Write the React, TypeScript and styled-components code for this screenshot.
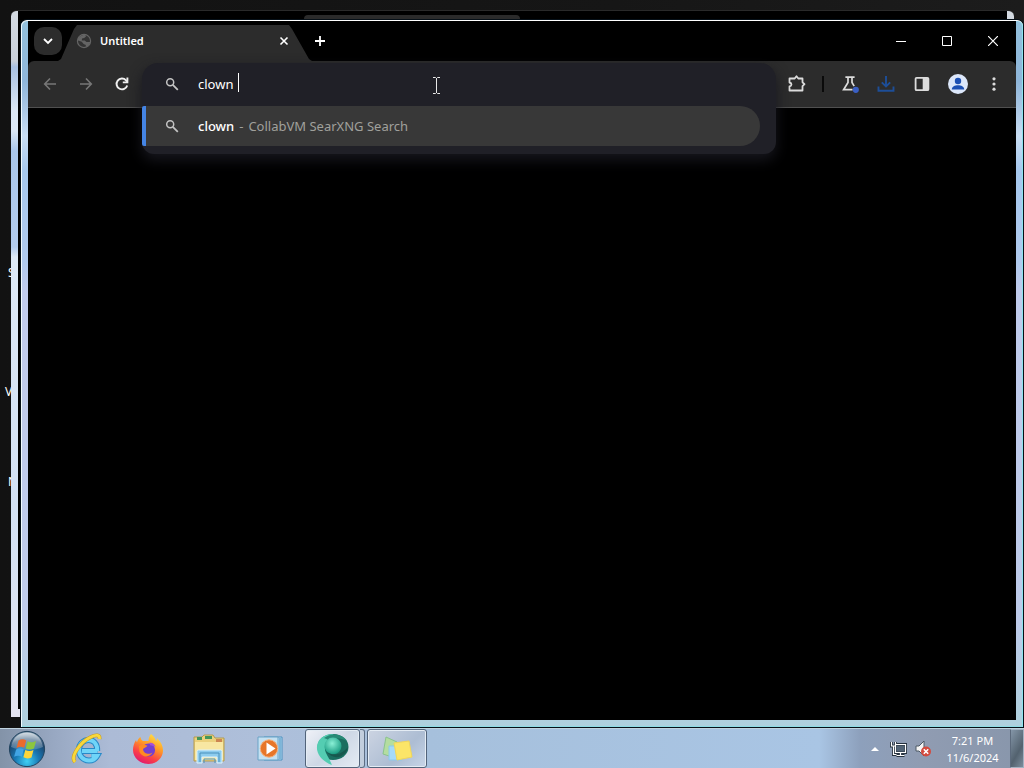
import React from "react";
import styled, { createGlobalStyle, css } from "styled-components";

const GlobalStyle = createGlobalStyle`
  * { box-sizing: border-box; }
  body {
    margin: 0;
    background: #141414;
    font-family: "Noto Sans", "Open Sans", sans-serif;
    font-size: 13px;
    color: #fff;
  }
  button { font: inherit; color: inherit; border: 0; padding: 0; background: none; }
  svg { display: block; }
`;

const Screen = styled.div`
  display: flex;
  flex-direction: column;
  height: 100vh;
  overflow: hidden;
`;

const Desktop = styled.main`
  position: relative;
  flex: 1;
  min-height: 0;
  overflow: hidden;
  background: linear-gradient(90deg, #121212, #161616 60%, #1c1c1c);
`;

const ShortcutLabel = styled.span<{ $x: number; $y: number }>`
  position: absolute;
  left: ${(p) => p.$x}px;
  top: ${(p) => p.$y}px;
  font-size: 12px;
  line-height: 16px;
`;

const BackWindow = styled.section`
  position: absolute;
  top: 10px;
  left: 11px;
  right: 10px;
  bottom: 11px;
  padding: 1px 7px 7px;
  border-top: 1px solid #2a2a2a;
  border-radius: 6px 6px 0 0;
  background: linear-gradient(180deg, #d4dae2 0, #c9cfd8 50px, #a9c0e0 56px, #dce7f4 100px, #dce8f5 120px, #a9c6ea 140px, #b3cbec 236px, #dde8f5 246px, #d3e0f2 70%, #e4e4f0);
`;

const BackClient = styled.div`
  height: 100%;
  margin: -1px 0 0;
  padding: 4px 0 0 286px;
  background: #000;
`;

const BackTab = styled.div`
  width: 216px;
  height: 10px;
  border-radius: 4px 4px 0 0;
  background: #2b2b2b;
`;

const Window = styled.section`
  position: absolute;
  top: 20px;
  left: 21px;
  right: 1px;
  bottom: 1px;
  padding: 0 7px 7px;
  border-top: 1px solid #fff;
  border-radius: 6px 6px 0 0;
  background: linear-gradient(180deg, #93c0dc 0, #8fb6da 60px, #adc9e6 90px, #c9def4 115px, #a6c8ee 150px, #b0caee 240px, #c0cbec 270px, #becbea 85%, #aed0dd);
  box-shadow: inset 1px 0 #f0faff, inset -1px 0 #8de4ee, inset 0 -1px #8ddce4, 0 0 0 1px #061018;
`;

const Client = styled.div`
  display: flex;
  flex-direction: column;
  height: 100%;
  background: #000;
`;

const TabStrip = styled.header`
  display: flex;
  align-items: center;
  height: 40px;
  padding-left: 6px;
`;

const SquareButton = styled.button<{ $filled?: boolean }>`
  display: grid;
  place-items: center;
  width: 28px;
  height: 28px;
  border-radius: 10px;
  ${(p) => p.$filled && css`background: #2c2c2c;`}
`;

const Tab = styled.div`
  display: flex;
  align-items: center;
  align-self: flex-end;
  width: 254px;
  height: 36px;
  margin: 0 -6px 0 -4px;
  padding: 0 20px 4px 18px;
  background: #2c2c2c;
  clip-path: polygon(0 100%, 3px 34px, 16px 4px, 19px 0, 231px 0, 234px 4px, 251px 34px, 100% 100%);
`;

const TabTitle = styled.span`
  flex: 1;
  margin-left: 8px;
  font-size: 11px;
  line-height: 16px;
  font-weight: 600;
`;

const TabClose = styled.button`
  display: grid;
  place-items: center;
  width: 16px;
  height: 16px;
`;

const WindowControls = styled.div`
  display: flex;
  margin-left: auto;
`;

const Control = styled.button`
  display: grid;
  place-items: center;
  width: 46px;
  height: 30px;
`;

const Toolbar = styled.div`
  display: flex;
  align-items: center;
  height: 47px;
  padding: 0 4px;
  background: #2c2c2c;
  border-bottom: 1px solid #505050;
  border-radius: 6px 6px 0 0;
`;

const ToolButton = styled.button<{ $tone?: string }>`
  display: grid;
  place-items: center;
  width: 36px;
  height: 36px;
  color: ${(p) => p.$tone ?? "#dcdcdc"};
`;

const Divider = styled.span`
  width: 2px;
  height: 16px;
  margin: 0 8px 0 7px;
  background: #0a0a0a;
`;

const Omnibox = styled.div`
  position: relative;
  flex: 1;
  align-self: stretch;
  margin: 0 3px 0 2px;
`;

const OmniPopup = styled.div`
  position: absolute;
  z-index: 1;
  top: 2px;
  left: 0;
  right: 0;
  padding-bottom: 8px;
  border-radius: 16px 16px 12px 12px;
  background: #202027;
  box-shadow: 0 6px 14px #17171e;
`;

const OmniRow = styled.div`
  position: relative;
  display: flex;
  align-items: center;
  height: 43px;
  padding: 0 0 2px 22px;
`;

const Query = styled.input`
  flex: 1;
  min-width: 0;
  height: 24px;
  margin-left: 18px;
  padding: 0;
  border: 0;
  outline: 0;
  background: transparent;
  color: #fff;
  font: inherit;
`;

const Caret = styled.span`
  position: absolute;
  left: 96px;
  top: 10px;
  width: 1px;
  height: 19px;
  background: #fff;
`;

const Suggestion = styled.button`
  display: flex;
  align-items: center;
  width: calc(100% - 16px);
  height: 40px;
  padding-left: 18px;
  border-left: 4px solid #4484e4;
  border-radius: 2px 20px 20px 2px;
  background: #383838;
  line-height: 20px;
`;

const Match = styled.span`
  margin-left: 18px;
  font-weight: 500;
`;

const Engine = styled.span`
  display: flex;
  gap: 5px;
  margin-left: 5px;
  color: #a0a09c;
`;

const Pointer = styled.svg`
  position: absolute;
  left: 290px;
  top: 14px;
`;

const Page = styled.div`
  flex: 1;
  background: #000;
`;

const Taskbar = styled.footer`
  display: flex;
  height: 40px;
  border-top: 1px solid #bfd3e0;
  background: linear-gradient(90deg, #8393a8 0, #98a8c2 54px, #acbbd6 110px, #aebfda 260px, #a6c0dc 430px, #a9c5e4 80%, #8da0bc 84%, #909cb2 90%, #8896ab);
`;

const StartButton = styled.button`
  display: grid;
  place-items: center;
  width: 54px;
  margin-right: 3px;
`;

const Launchers = styled.nav`
  display: flex;
  gap: 1px;
`;

const TaskButton = styled.button<{ $state?: "active" | "open"; $stacked?: boolean }>`
  display: grid;
  place-items: center;
  width: 60px;
  height: 39px;
  ${(p) =>
    p.$state &&
    css`
      border: 1px solid #52637a;
      border-radius: 3px;
      box-shadow: inset 0 0 0 1px #e4ecf4;
      background: ${p.$state === "active"
        ? "linear-gradient(135deg, #f0f2f8, #cdd7e5 50%, #e4ebf4)"
        : "linear-gradient(135deg, #ccd4e2, #adbdd3 60%, #c7d5e8)"};
    `}
  ${(p) =>
    p.$stacked &&
    css`
      width: 55px;
      margin-left: 4px;
    `}
`;

const StackEdge = styled.span`
  width: 5px;
  height: 39px;
  margin: 0 1px 0 -1px;
  border: 1px solid #5d6e84;
  border-left: 0;
  border-radius: 0 3px 3px 0;
  background: #c2cedd;
`;

const Tray = styled.div`
  display: flex;
  align-items: center;
  margin-left: auto;
`;

const TrayButton = styled.button`
  display: grid;
  place-items: center;
  width: 24px;
  height: 24px;
`;

const Clock = styled.button`
  width: 75px;
  font-size: 11px;
  line-height: 17px;
  text-align: center;
`;

const ShowDesktop = styled.button`
  align-self: stretch;
  width: 14px;
  border: 1px solid #a4b2c2;
  border-left-color: #5c6a7c;
  background: linear-gradient(120deg, #8496a8, #53626f 60%, #7c8d9c);
`;

const SearchIcon = () => (
  <svg width="16" height="16" viewBox="0 0 16 16" fill="none" stroke="#c4c4c4" strokeWidth="1.5">
    <circle cx="6.2" cy="6.2" r="3.5" />
    <path d="M8.8 8.8l5 5" strokeWidth="1.8" />
  </svg>
);

const Globe = () => (
  <svg width="16" height="16" viewBox="0 0 16 16">
    <circle cx="8" cy="8" r="6.6" fill="#333" stroke="#646464" strokeWidth="1.2" />
    <path d="M2 5.5C4 3 6.5 2 9.2 1.8L10 3.4 8.2 5 6 5.6 5.8 7.4h3l1.6 1.5h3.8c-.4 2.6-2 4.6-4.4 5.2V12L7.6 11 5.8 8.8 2 7.4z" fill="#646464" />
  </svg>
);

const Chevron = () => (
  <svg width="12" height="12" viewBox="0 0 12 12" fill="none" stroke="#fff" strokeWidth="1.8">
    <path d="M2 4l4 4 4-4" />
  </svg>
);

const Arrow = ({ flip }: { flip?: boolean }) => (
  <svg width="16" height="16" viewBox="0 0 16 16" fill="none" stroke="currentColor" strokeWidth="1.6">
    <path d={flip ? "M2 8h11M8 2.5L13.3 8 8 13.5" : "M14 8H3M8 2.5L2.7 8 8 13.5"} />
  </svg>
);

const Reload = () => (
  <svg width="16" height="16" viewBox="0 0 16 16" fill="none" stroke="currentColor" strokeWidth="1.9">
    <path d="M13.2 9.4A5.4 5.4 0 1 1 12 4.3l1.2 1.3" />
    <path d="M13.4 1.5v4.9H8.8" />
  </svg>
);

const Puzzle = () => (
  <svg width="20" height="20" viewBox="0 0 20 20" fill="none" stroke="currentColor" strokeWidth="1.8" strokeLinejoin="round">
    <path d="M2.5 4.5h5.200l1.800-2.200 1.800 2.200H15.500v3.800l2 1.900-2 1.900v4.400h-13v-4c2.600-.6 2.600-3.400 0-4z" />
  </svg>
);

const Flask = () => (
  <svg width="20" height="20" viewBox="0 0 20 20" fill="none" stroke="currentColor" strokeWidth="1.7">
    <path d="M5.4 3.2h9.2M8 3v5.500L3.600 15.700h9M12 3v5.500l2.200 3.600" />
    <circle cx="15.8" cy="15.8" r="3.1" fill="#3a5fc4" stroke="none" />
  </svg>
);

const Download = () => (
  <svg width="20" height="20" viewBox="0 0 20 20" fill="none" stroke="currentColor" strokeWidth="1.9">
    <path d="M10 2v10M5.8 8.3l4.2 4.2 4.2-4.2M2.5 12.5v4.2h15v-4.2" />
  </svg>
);

const SidePanel = () => (
  <svg width="16" height="16" viewBox="0 0 16 16">
    <rect x="1.6" y="1.8" width="12.8" height="12.4" rx="1" fill="none" stroke="currentColor" strokeWidth="1.8" />
    <path d="M8.7 2h5.6v12H8.7z" fill="currentColor" />
  </svg>
);

const Profile = () => (
  <svg width="20" height="20" viewBox="0 0 20 20">
    <circle cx="10" cy="10" r="10" fill="#dce7fa" />
    <circle cx="10" cy="7" r="3.2" fill="#1c50b4" />
    <path d="M3.8 15.4c0-2.8 3-4.2 6.2-4.2s6.2 1.4 6.2 4.2z" fill="#1c50b4" />
  </svg>
);

const Dots = () => (
  <svg width="16" height="16" viewBox="0 0 16 16" fill="currentColor">
    <circle cx="8" cy="2.8" r="1.6" />
    <circle cx="8" cy="8" r="1.6" />
    <circle cx="8" cy="13.2" r="1.6" />
  </svg>
);

const StartOrb = () => (
  <svg width="38" height="38" viewBox="0 0 38 38">
    <defs>
      <radialGradient id="orb" cx=".5" cy=".85" r=".85">
        <stop offset="0" stopColor="#3fd0f4" />
        <stop offset=".4" stopColor="#1878b4" />
        <stop offset=".75" stopColor="#1c466e" />
        <stop offset="1" stopColor="#7e98ac" />
      </radialGradient>
      <linearGradient id="orbShine" x2="0" y2="1">
        <stop stopColor="#fff" stopOpacity=".7" />
        <stop offset="1" stopColor="#fff" stopOpacity=".15" />
      </linearGradient>
    </defs>
    <circle cx="19" cy="19" r="17.6" fill="url(#orb)" stroke="#23445f" />
    <path d="M3 17C5 6 12 2.5 19 2.5S33 6 35 17c-8 4-24 4-32 0z" fill="url(#orbShine)" />
    <path d="M10.5 10.5c3-1.7 5.3-1.5 7.7-.1l-2 7.4c-2.6-1.4-4.8-1.4-7.7.1z" fill="#ea6a2c" />
    <path d="M19.6 11.2c2.7 1.4 5 1.4 8.4-.2l-2 7.5c-3 1.5-5.6 1.3-8.3-.1z" fill="#8cc63e" />
    <path d="M8.1 19.4c2.8-1.5 5.2-1.4 7.7 0l-2 7.4c-2.5-1.4-4.8-1.4-7.7 0z" fill="#41a4e4" />
    <path d="M17.3 19.9c2.7 1.4 5.2 1.5 8.2.2l-2 7.3c-3 1.5-5.5 1.3-8.1-.1z" fill="#fcd63a" />
  </svg>
);

const Explorer = () => (
  <svg width="32" height="32" viewBox="0 0 32 32" fill="none">
    <path d="M26.5 18H11M26.2 18C26.5 10 22 7 17.5 7S8 10.5 8 17s4.5 10.5 10 10.5c4 0 6.6-2 8-4.5h-5.5" stroke="#2789c8" strokeWidth="6" />
    <path d="M26.5 18H11M26.2 18C26.5 10 22 7 17.5 7S8 10.5 8 17s4.5 10.5 10 10.5c4 0 6.6-2 8-4.5h-5.5" stroke="#6fd4f8" strokeWidth="4" />
    <path d="M4 29C-1 24 9 9 20 4c5-2.5 9-2.2 8.5 2" stroke="#c89a20" strokeWidth="3.8" />
    <path d="M4 29C-1 24 9 9 20 4c5-2.5 9-2.2 8.5 2" stroke="#f8d83c" strokeWidth="2.8" />
  </svg>
);

const Firefox = () => (
  <svg width="32" height="32" viewBox="0 0 32 32">
    <defs>
      <linearGradient id="fox" x1=".8" y1="0" x2=".3" y2="1">
        <stop stopColor="#ffe84a" />
        <stop offset=".4" stopColor="#ff9a26" />
        <stop offset=".72" stopColor="#fb4146" />
        <stop offset="1" stopColor="#df1770" />
      </linearGradient>
    </defs>
    <path d="M19 1c3 2.5 4.5 4.5 5 7 1-1 1-2 1-3 4 4 6 8 6 12.5C31 25 24.5 31 16.5 31S1 25 1 17c0-4 1.2-7 3-10 .2 1 .5 1.8 1 2.3C5.7 6.5 7 5 8.500 4c.2 2 1 3.2 2.5 4h5.500C16.500 5 17.500 3 19 1z" fill="url(#fox)" />
    <circle cx="16.5" cy="17" r="6.6" fill="#7440d0" />
    <path d="M7 13c3-2 5.5-1.5 8.5-.2-1 1.800-3.500 2-4.500 3.200.5 5 6.500 6 9.500 3.500-2 4.500-10 6-13-.5z" fill="#ff8a22" />
    <path d="M17 10c3-1 6 1 6.5 4-2-1-3-1.500-5-1.500z" fill="#a650d8" />
  </svg>
);

const Folder = () => (
  <svg width="34" height="32" viewBox="0 0 34 32">
    <path d="M2 28V4h8l2-2h9l2 3h9v23z" fill="#ecd17c" stroke="#b39b51" />
    <path d="M5 4h5v3H5zM13 3h7v3h-7z" fill="#43965a" />
    <path d="M24 6h6v3h-6z" fill="#cc8550" />
    <path d="M3 9h28v18H3z" fill="#f8e7a2" />
    <path d="M5 30V18.5Q5 17 6.5 17h22Q30 17 30 18.5V30h-5v-6H10v6z" fill="#8dccee" stroke="#dff2fa" />
    <path d="M8 29v-9h19v9M12 30v-4h11v4" fill="none" stroke="#4a91bc" />
  </svg>
);

const MediaPlayer = () => (
  <svg width="30" height="30" viewBox="0 0 30 30">
    <path d="M9 3h18v23H9z" fill="#b8daf0" stroke="#4c92c0" />
    <path d="M3 3h20v23H3z" fill="#c4e1f2" stroke="#6aa3c6" />
    <path d="M25 4v21" stroke="#438fc0" />
    <circle cx="14" cy="14.5" r="8.7" fill="#e77629" stroke="#f4b27f" />
    <path d="M11.5 8.5v12l9-6z" fill="#fff" />
  </svg>
);

const Swirl = () => (
  <svg width="34" height="34" viewBox="0 0 34 34">
    <defs>
      <radialGradient id="swirlBall" cx=".45" cy=".35" r=".65">
        <stop stopColor="#8af0d6" />
        <stop offset="1" stopColor="#179a80" />
      </radialGradient>
    </defs>
    <ellipse cx="17" cy="15" rx="15.5" ry="13" fill="#1a6e60" />
    <path d="M16 33C5 29 -1 20 1.500 12 3.500 5 10 2 18 2 10 6 7 15 10 21c2 4 4 7 6 12z" fill="#54cdb2" />
    <path d="M8 6C16 0 27 2 31 9c-7-4-14-3-18-1z" fill="#278a76" />
    <circle cx="17" cy="14" r="8.5" fill="url(#swirlBall)" />
    <path d="M10 19c5 5 15 5 22-4-2 10-14 15-22 4z" fill="#17584e" />
  </svg>
);

const StickyNotes = () => (
  <svg width="32" height="30" viewBox="0 0 32 30">
    <path d="M5 3l11 5-5 15-9-3z" fill="#b4dda0" stroke="#8bc38e" />
    <path d="M8 12h13v14H8z" fill="#a5dafa" stroke="#8cc8ea" />
    <path d="M13 9l15-2 3 16-15 3z" fill="#fbe568" stroke="#f0d65a" />
  </svg>
);

const Network = () => (
  <svg width="18" height="18" viewBox="0 0 18 18" fill="none" stroke="#26323f" strokeWidth="3">
    <path d="M5.5 4.5h10v8h-10zM10.5 13v2.5M6.5 15.5h8M1.500 2v4h4V2M3.500 6v8.500h3" />
    <path d="M5.5 4.5h10v8h-10zM10.5 13v2.5M6.5 15.5h8M1.500 2v4h4V2M3.500 6v8.500h3" stroke="#fff" strokeWidth="1.2" />
    <path d="M6.5 5.5h8v6h-8z" fill="#526375" stroke="none" />
  </svg>
);

const Muted = () => (
  <svg width="18" height="18" viewBox="0 0 18 18">
    <path d="M2 6h3l5-5v15l-5-5H2z" fill="#f4f4f4" stroke="#4c5865" />
    <circle cx="12" cy="11.5" r="5" fill="#d44a3e" />
    <path d="M9.8 9.3l4.4 4.4M14.2 9.3l-4.400 4.400" stroke="#fff" strokeWidth="1.6" />
  </svg>
);

export default function App() {
  const [query, setQuery] = React.useState("clown ");
  return (
    <>
      <GlobalStyle />
      <Screen>
        <Desktop>
          <ShortcutLabel $x={8} $y={265}>S</ShortcutLabel>
          <ShortcutLabel $x={5} $y={384}>V</ShortcutLabel>
          <ShortcutLabel $x={8} $y={474}>N</ShortcutLabel>
          <BackWindow>
            <BackClient>
              <BackTab />
            </BackClient>
          </BackWindow>
          <Window>
            <Client>
              <TabStrip>
                <SquareButton $filled aria-label="Search tabs"><Chevron /></SquareButton>
                <Tab>
                  <Globe />
                  <TabTitle>Untitled</TabTitle>
                  <TabClose aria-label="Close tab">
                    <svg width="10" height="10" viewBox="0 0 10 10" stroke="#fff" strokeWidth="1.6">
                      <path d="M1.5 1.5l7 7M8.5 1.5l-7 7" />
                    </svg>
                  </TabClose>
                </Tab>
                <SquareButton aria-label="New tab">
                  <svg width="12" height="12" viewBox="0 0 12 12" stroke="#fff" strokeWidth="1.8">
                    <path d="M6 1v10M1 6h10" />
                  </svg>
                </SquareButton>
                <WindowControls>
                  <Control aria-label="Minimize">
                    <svg width="10" height="10" viewBox="0 0 10 10" stroke="#fff"><path d="M0 5.5h10" /></svg>
                  </Control>
                  <Control aria-label="Maximize">
                    <svg width="10" height="10" viewBox="0 0 10 10" fill="none" stroke="#fff"><path d="M.5.5h9v9h-9z" /></svg>
                  </Control>
                  <Control aria-label="Close">
                    <svg width="10" height="10" viewBox="0 0 10 10" stroke="#fff" strokeWidth="1.2"><path d="M0 0l10 10M10 0L0 10" /></svg>
                  </Control>
                </WindowControls>
              </TabStrip>
              <Toolbar>
                <ToolButton $tone="#777" aria-label="Back"><Arrow /></ToolButton>
                <ToolButton $tone="#777" aria-label="Forward"><Arrow flip /></ToolButton>
                <ToolButton $tone="#f0f0f0" aria-label="Reload"><Reload /></ToolButton>
                <Omnibox>
                  <OmniPopup>
                    <OmniRow>
                      <SearchIcon />
                      <Query aria-label="Address and search bar" value={query} onChange={(e) => setQuery(e.target.value)} />
                      <Caret />
                      <Pointer width="9" height="17" viewBox="0 0 9 17" fill="none" stroke="#e8e8e8">
                        <path d="M1 .5h2.5l1 1 1-1H8M4.5 1v15M1 16.5h2.5l1-1 1 1H8" />
                      </Pointer>
                    </OmniRow>
                    <Suggestion>
                      <SearchIcon />
                      <Match>clown</Match>
                      <Engine>
                        <span>-</span>
                        <span>CollabVM SearXNG Search</span>
                      </Engine>
                    </Suggestion>
                  </OmniPopup>
                </Omnibox>
                <ToolButton aria-label="Extensions"><Puzzle /></ToolButton>
                <Divider />
                <ToolButton aria-label="Experiments"><Flask /></ToolButton>
                <ToolButton $tone="#1d4e98" aria-label="Downloads"><Download /></ToolButton>
                <ToolButton aria-label="Side panel"><SidePanel /></ToolButton>
                <ToolButton aria-label="Profile"><Profile /></ToolButton>
                <ToolButton aria-label="Menu"><Dots /></ToolButton>
              </Toolbar>
              <Page />
            </Client>
          </Window>
        </Desktop>
        <Taskbar>
          <StartButton aria-label="Start"><StartOrb /></StartButton>
          <Launchers>
            <TaskButton aria-label="Internet Explorer"><Explorer /></TaskButton>
            <TaskButton aria-label="Firefox"><Firefox /></TaskButton>
            <TaskButton aria-label="Windows Explorer"><Folder /></TaskButton>
            <TaskButton aria-label="Media Player"><MediaPlayer /></TaskButton>
            <TaskButton $state="active" $stacked aria-label="Browser"><Swirl /></TaskButton>
            <StackEdge />
            <TaskButton $state="open" aria-label="Sticky Notes"><StickyNotes /></TaskButton>
          </Launchers>
          <Tray>
            <TrayButton aria-label="Show hidden icons">
              <svg width="8" height="4" viewBox="0 0 8 4"><path d="M0 4l4-4 4 4z" fill="#fff" /></svg>
            </TrayButton>
            <TrayButton aria-label="Network"><Network /></TrayButton>
            <TrayButton aria-label="Volume"><Muted /></TrayButton>
            <Clock>
              <div>7:21 PM</div>
              <div>11/6/2024</div>
            </Clock>
            <ShowDesktop aria-label="Show desktop" />
          </Tray>
        </Taskbar>
      </Screen>
    </>
  );
}
